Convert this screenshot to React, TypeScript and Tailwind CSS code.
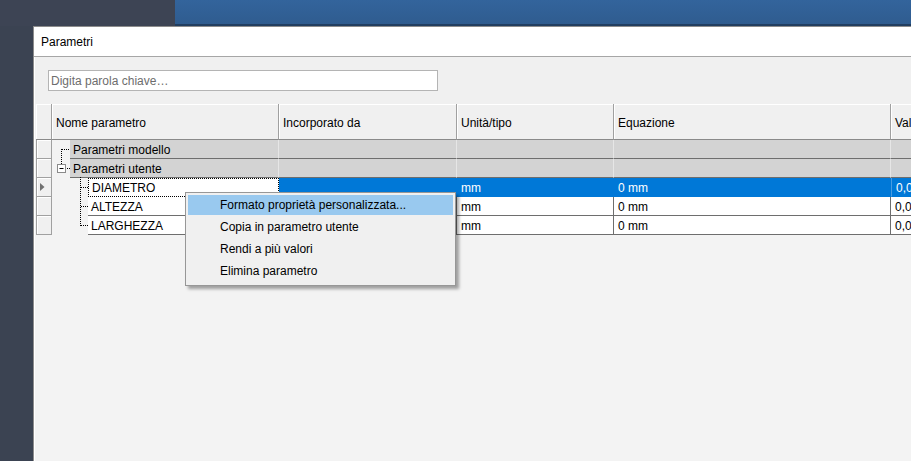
import React from 'react';

// Larghezze colonne (px) prese dallo screenshot
const COLS = { rh: 16, name: 227, inc: 178, unit: 157, eq: 277, val: 100 };

type Row =
  | { kind: 'group'; label: string }
  | { kind: 'param'; label: string; unit: string; eq: string; val: string; selected?: boolean };

const rows: Row[] = [
  { kind: 'group', label: 'Parametri modello' },
  { kind: 'group', label: 'Parametri utente' },
  { kind: 'param', label: 'DIAMETRO', unit: 'mm', eq: '0 mm', val: '0,000', selected: true },
  { kind: 'param', label: 'ALTEZZA', unit: 'mm', eq: '0 mm', val: '0,000' },
  { kind: 'param', label: 'LARGHEZZA', unit: 'mm', eq: '0 mm', val: '0,000' },
];

const menuItems = [
  'Formato proprietà personalizzata...',
  'Copia in parametro utente',
  'Rendi a più valori',
  'Elimina parametro',
];

const TreeLines: React.FC = () => (
  <svg className="absolute left-[16px] top-[36px]" width="36" height="95" viewBox="0 0 36 95">
    <g stroke="#000" strokeWidth="1" strokeDasharray="1 1" fill="none">
      <path d="M10 9.5H18" />
      <path d="M9.5 9V24" />
      <path d="M13 28.5H18" />
      <path d="M28.5 37V86" />
      <path d="M29 47.5H36M29 66.5H36M29 85.5H36" />
    </g>
    <rect x="5.5" y="24.5" width="8" height="8" fill="#fff" stroke="#8a8a8a" />
    <path d="M7.5 28.5H11.5" stroke="#000" />
  </svg>
);

const HeaderCell: React.FC<{ w: number; label?: string }> = ({ w, label }) => (
  <div
    className="h-[36px] shrink-0 flex items-center pl-[4px] pt-[3px] border-r border-b border-[#a0a0a0] border-b-[#8a8a8a] bg-[#f0f0f0] shadow-[inset_1px_1px_0_#ffffff] whitespace-nowrap overflow-hidden"
    style={{ width: w }}
  >
    {label}
  </div>
);

const GridRow: React.FC<{ row: Row }> = ({ row }) => {
  const rh = (
    <div
      className="h-[19px] shrink-0 flex items-center pl-[3px] border-l border-r border-b border-[#a0a0a0] bg-[#f0f0f0] shadow-[inset_1px_1px_0_#ffffff]"
      style={{ width: COLS.rh }}
    >
      {row.kind === 'param' && row.selected && (
        <svg width="5" height="8" viewBox="0 0 5 8">
          <path d="M0 0L4.5 4L0 8Z" fill="#707070" />
        </svg>
      )}
    </div>
  );

  if (row.kind === 'group') {
    const grey = 'h-[19px] shrink-0 bg-[#d3d3d3] border-r border-r-[#e6e6e6] border-b border-b-[#6e6e6e]';
    return (
      <div className="flex">
        {rh}
        <div className="flex shrink-0" style={{ width: COLS.name }}>
          <div className="w-[18px] shrink-0" />
          <div className={`${grey} flex-1 flex items-center pl-[3px] pt-[1px] whitespace-nowrap`}>{row.label}</div>
        </div>
        <div className={grey} style={{ width: COLS.inc }} />
        <div className={grey} style={{ width: COLS.unit }} />
        <div className={grey} style={{ width: COLS.eq }} />
        <div className={grey} style={{ width: COLS.val }} />
      </div>
    );
  }

  const sel = !!row.selected;
  const cell = sel
    ? 'h-[19px] shrink-0 flex items-center pl-[4px] pt-[1px] bg-[#0078d7] text-white border-b border-b-[#0078d7] whitespace-nowrap'
    : 'h-[19px] shrink-0 flex items-center pl-[4px] pt-[1px] bg-white border-r border-b border-[#6e6e6e] whitespace-nowrap';
  return (
    <div className="flex">
      {rh}
      <div className="flex shrink-0" style={{ width: COLS.name }}>
        <div className="w-[36px] shrink-0" />
        <div
          className={
            sel
              ? 'h-[19px] flex-1 flex items-center pl-[3px] pt-[1px] bg-white border border-dotted border-black whitespace-nowrap'
              : 'h-[19px] flex-1 flex items-center pl-[3px] pt-[1px] bg-white border-r border-b border-[#6e6e6e] whitespace-nowrap'
          }
        >
          {row.label}
        </div>
      </div>
      <div className={cell} style={{ width: COLS.inc }} />
      <div className={cell} style={{ width: COLS.unit }}>{row.unit}</div>
      <div className={cell} style={{ width: COLS.eq }}>{row.eq}</div>
      <div
        className={sel ? `${cell} border-l border-l-[#4a9be0] pl-[1px]` : `${cell} bg-[#dcdcdc] pl-[2px]`}
        style={{ width: COLS.val }}
      >
        {row.val}
      </div>
    </div>
  );
};

export default function App() {
  return (
    <div className="relative w-[911px] h-[461px] overflow-hidden bg-[#3b4352] font-['Liberation_Sans',Arial,sans-serif] text-[12px] text-black">
      {/* sfondo desktop */}
      <div className="flex h-[26px]">
        <div className="w-[175px] bg-[#3d4454]" />
        <div className="flex-1 bg-gradient-to-b from-[#33649c] to-[#2f5c8f] border-b-2 border-[#213e60]" />
      </div>

      {/* finestra Parametri */}
      <div className="absolute left-[33px] top-[26px] w-[920px] h-[460px] flex flex-col border-l border-t border-[#8c8c8c] bg-[#f0f0f0]">
        <div className="h-[30px] shrink-0 flex items-center pl-[7px] bg-white border-b border-[#a6a6a6]">
          Parametri
        </div>
        <div className="flex-1 flex flex-col border-l border-white bg-[#f3f3f3]">
          <div className="pt-[13px] pl-[13px] pb-[13px] bg-[#f0f0f0]">
            <div className="w-[390px] h-[21px] flex items-center pl-[2px] bg-white border border-[#b4b4b4] text-[#6d6d6d]">
              Digita parola chiave…
            </div>
          </div>
          <div className="relative pl-[1px]">
            <div className="relative">
              <div className="flex">
                <HeaderCell w={COLS.rh} />
                <HeaderCell w={COLS.name} label="Nome parametro" />
                <HeaderCell w={COLS.inc} label="Incorporato da" />
                <HeaderCell w={COLS.unit} label="Unità/tipo" />
                <HeaderCell w={COLS.eq} label="Equazione" />
                <HeaderCell w={COLS.val} label="Valore nominale" />
              </div>
              {rows.map((r) => (
                <GridRow key={r.label} row={r} />
              ))}
              <TreeLines />
            </div>
          </div>
        </div>
      </div>

      {/* menu contestuale */}
      <div className="absolute left-[185px] top-[192px] w-[271px] flex flex-col p-[2px] bg-[#f0f0f0] border border-[#979797] shadow-[3px_3px_3px_rgba(0,0,0,0.35)]">
        {menuItems.map((m, i) => (
          <div
            key={m}
            className={
              i === 0
                ? 'h-[20px] mb-[2px] flex items-center pl-[32px] pb-[1px] bg-[#99c9ef] whitespace-nowrap'
                : 'h-[22px] flex items-center pl-[32px] pb-[2px] whitespace-nowrap'
            }
          >
            {m}
          </div>
        ))}
      </div>
    </div>
  );
}
